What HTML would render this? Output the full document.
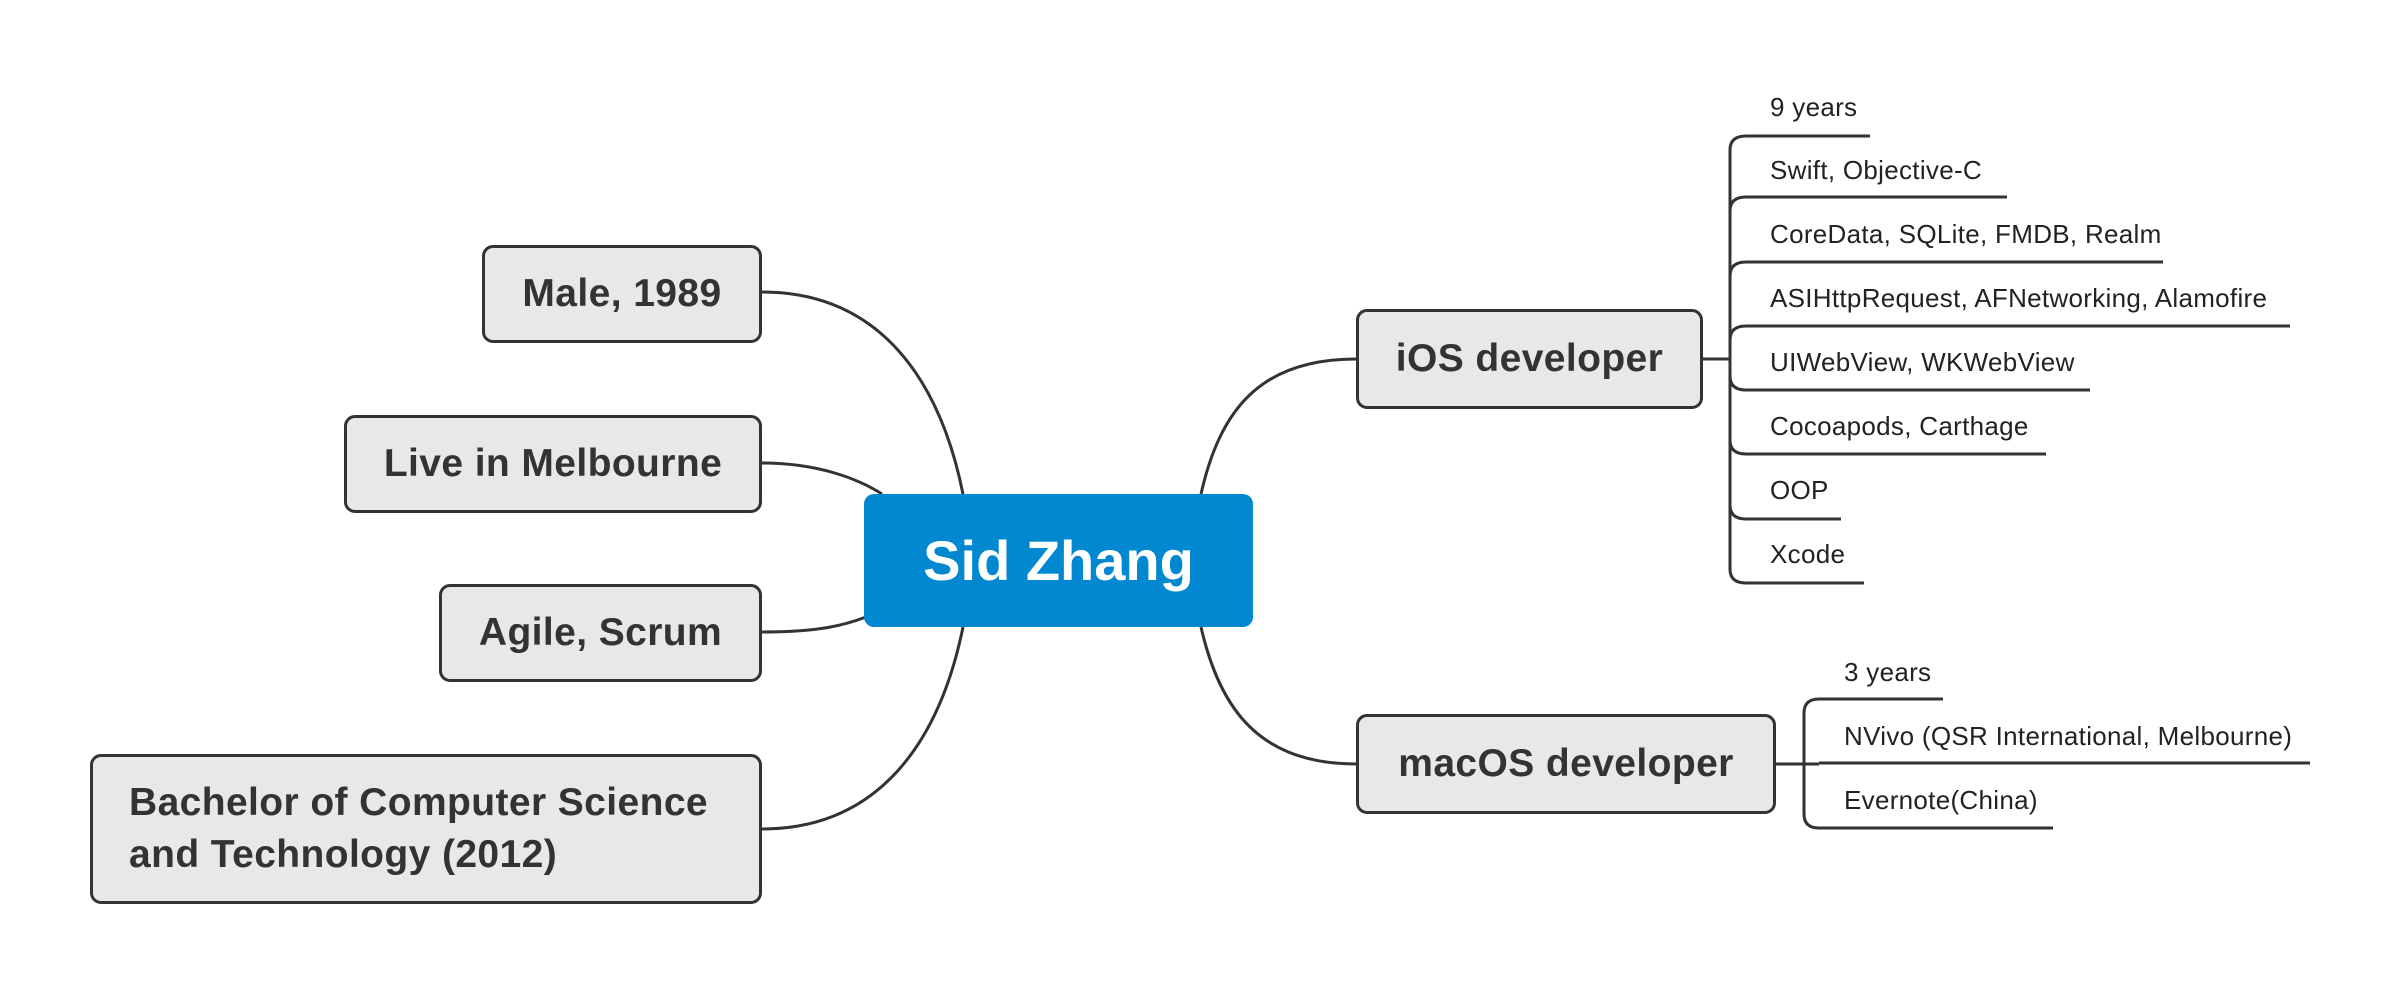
<!DOCTYPE html>
<html><head><meta charset="utf-8"><style>
html,body{margin:0;padding:0;background:#fff;}
body{width:2399px;height:993px;position:relative;overflow:hidden;font-family:"Liberation Sans",sans-serif;}
.b{position:absolute;box-sizing:border-box;background:#e8e8e8;border:3px solid #333;border-radius:11px;color:#333;font-weight:bold;font-size:39px;letter-spacing:0.4px;display:flex;align-items:center;justify-content:center;}
.r{position:absolute;box-sizing:border-box;background:#0288d1;border-radius:10px;color:#fff;font-weight:bold;font-size:56px;display:flex;align-items:center;justify-content:center;}
.t{position:absolute;font-size:26px;letter-spacing:0.3px;color:#222;white-space:nowrap;}
svg{position:absolute;left:0;top:0;}
</style></head><body>
<svg width="2399" height="993" fill="none" stroke="#333" stroke-width="3">
<path d="M762 292 C880 292 940 380 963 494"/>
<path d="M762 463 C820 463 860 480 882 494"/>
<path d="M762 632 C820 632 845 625 866 617"/>
<path d="M762 829 C880 829 940 740 963 627"/>
<path d="M1356 359 C1260 359 1220 410 1201 494"/>
<path d="M1356 764 C1260 764 1220 710 1201 627"/>
<path d="M1703 359 H1730"/>
<path d="M1776 764 H1819"/>
<path d="M1730 150 V570"/>
<path d="M1746 136 H1870 M1730 150 Q1730 136 1746 136"/>
<path d="M1746 197 H2007 M1730 211 Q1730 197 1746 197"/>
<path d="M1746 262 H2163 M1730 276 Q1730 262 1746 262"/>
<path d="M1746 326 H2290 M1730 340 Q1730 326 1746 326"/>
<path d="M1746 390 H2090 M1730 376 Q1730 390 1746 390"/>
<path d="M1746 454 H2046 M1730 440 Q1730 454 1746 454"/>
<path d="M1746 519 H1841 M1730 505 Q1730 519 1746 519"/>
<path d="M1746 583 H1864 M1730 569 Q1730 583 1746 583"/>
<path d="M1804 713 V814"/>
<path d="M1819 699 H1943 M1804 713 Q1804 699 1819 699"/>
<path d="M1819 763 H2310"/>
<path d="M1819 828 H2053 M1804 814 Q1804 828 1819 828"/>
</svg>
<div class="b" style="left:482px;top:245px;width:280px;height:98px;">Male, 1989</div>
<div class="b" style="left:344px;top:415px;width:418px;height:98px;">Live in Melbourne</div>
<div class="b" style="left:439px;top:584px;width:323px;height:98px;">Agile, Scrum</div>
<div class="b" style="left:90px;top:754px;width:672px;height:150px;justify-content:flex-start;padding-left:36px;line-height:52px;">Bachelor of Computer Science<br>and Technology (2012)</div>
<div class="r" style="left:864px;top:494px;width:389px;height:133px;">Sid Zhang</div>
<div class="b" style="left:1356px;top:309px;width:347px;height:100px;">iOS developer</div>
<div class="b" style="left:1356px;top:714px;width:420px;height:100px;">macOS developer</div>
<div class="t" style="left:1770px;top:92px;">9 years</div>
<div class="t" style="left:1770px;top:155px;">Swift, Objective-C</div>
<div class="t" style="left:1770px;top:219px;">CoreData, SQLite, FMDB, Realm</div>
<div class="t" style="left:1770px;top:283px;">ASIHttpRequest, AFNetworking, Alamofire</div>
<div class="t" style="left:1770px;top:347px;">UIWebView, WKWebView</div>
<div class="t" style="left:1770px;top:411px;">Cocoapods, Carthage</div>
<div class="t" style="left:1770px;top:475px;">OOP</div>
<div class="t" style="left:1770px;top:539px;">Xcode</div>
<div class="t" style="left:1844px;top:657px;">3 years</div>
<div class="t" style="left:1844px;top:721px;">NVivo (QSR International, Melbourne)</div>
<div class="t" style="left:1844px;top:785px;">Evernote(China)</div>
</body></html>
